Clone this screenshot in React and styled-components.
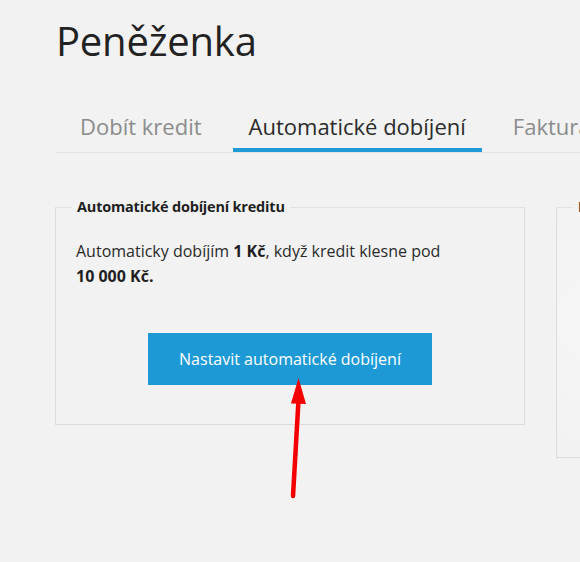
import React from "react";
import styled, { createGlobalStyle } from "styled-components";

const GlobalStyle = createGlobalStyle`
  html, body {
    margin: 0;
    padding: 0;
    background: #f2f2f2;
    overflow: hidden;
  }
  body {
    font-family: "Open Sans", "Liberation Sans", sans-serif;
    color: #222;
  }
`;

const Page = styled.div`
  position: relative;
  width: 580px;
  height: 562px;
  overflow: hidden;
  padding-left: 55px;
  box-sizing: border-box;
`;

const Title = styled.h1`
  margin: 16px 0 0 1px;
  font-size: 40px;
  line-height: 50px;
  font-weight: 400;
  color: #222;
  letter-spacing: -0.2px;
`;

const TabNav = styled.nav`
  display: flex;
  gap: 15px;
  margin-top: 46px;
  padding-left: 9px;
  width: 1000px;
  border-bottom: 1px solid #e2e2e2;
`;

const Tab = styled.a`
  display: block;
  padding: 0 16px 8px;
  font-size: 22px;
  line-height: 28px;
  white-space: nowrap;
  color: ${(p) => (p.active ? "#2b2b2b" : "#8c8c8c")};
  border-bottom: 4px solid ${(p) => (p.active ? "#1e9ad6" : "transparent")};
`;

const Cards = styled.div`
  display: flex;
  align-items: flex-start;
  gap: 31px;
  margin-top: 44px;
  width: 1200px;
`;

const Card = styled.fieldset`
  margin: 0;
  padding: 0 20px ${(p) => p.bottom}px;
  min-width: 0;
  width: ${(p) => p.width}px;
  box-sizing: border-box;
  border: 1px solid #dcdcdc;
  border-top-color: #e2e2e2;
  background: ${(p) => p.tint || "transparent"};
`;

const Legend = styled.legend`
  padding: 0 5px;
  margin-left: -4px;
  font-size: 14.5px;
  line-height: 20px;
  font-weight: 700;
  color: #1f1f1f;
  letter-spacing: -0.2px;
`;

const Text = styled.p`
  margin: 22px 0 0;
  font-size: 16px;
  line-height: 25px;
  color: #2a2a2a;

  b {
    font-weight: 700;
    color: #1f1f1f;
    white-space: nowrap;
  }
`;

const ButtonRow = styled.div`
  display: flex;
  justify-content: center;
  margin-top: 44px;
`;

const Button = styled.button`
  width: 284px;
  height: 52px;
  border: none;
  border-radius: 0;
  background: #1d9ad6;
  color: #fff;
  font-family: "Open Sans", "Liberation Sans", sans-serif;
  font-size: 16px;
  cursor: pointer;
`;

const Blank = styled.div`
  height: 240px;
`;

const Arrow = styled.svg`
  position: absolute;
  left: 0;
  top: 0;
  pointer-events: none;
`;

export default function App() {
  return (
    <>
      <GlobalStyle />
      <Page>
        <Title>Peněženka</Title>
        <TabNav>
          <Tab>Dobít kredit</Tab>
          <Tab active>Automatické dobíjení</Tab>
          <Tab>Fakturační údaje</Tab>
        </TabNav>
        <Cards>
          <Card width={470} bottom={39}>
            <Legend>Automatické dobíjení kreditu</Legend>
            <Text>
              Automaticky dobíjím <b>1&nbsp;Kč</b>, když kredit klesne pod <b>10&nbsp;000&nbsp;Kč.</b>
            </Text>
            <ButtonRow>
              <Button>Nastavit automatické dobíjení</Button>
            </ButtonRow>
          </Card>
          <Card width={470} bottom={0} tint="radial-gradient(ellipse at 30% 45%, #f7f7f7 0%, #f2f2f2 70%)">
            <Legend>Doporučené</Legend>
            <Blank />
          </Card>
        </Cards>
        <Arrow width="580" height="562" viewBox="0 0 580 562">
          <line x1="293" y1="496" x2="298.5" y2="400" stroke="#f50000" strokeWidth="4.5" strokeLinecap="round" />
          <polygon points="298.5,378 306,404 291,403.5" fill="#f50000" />
        </Arrow>
      </Page>
    </>
  );
}
